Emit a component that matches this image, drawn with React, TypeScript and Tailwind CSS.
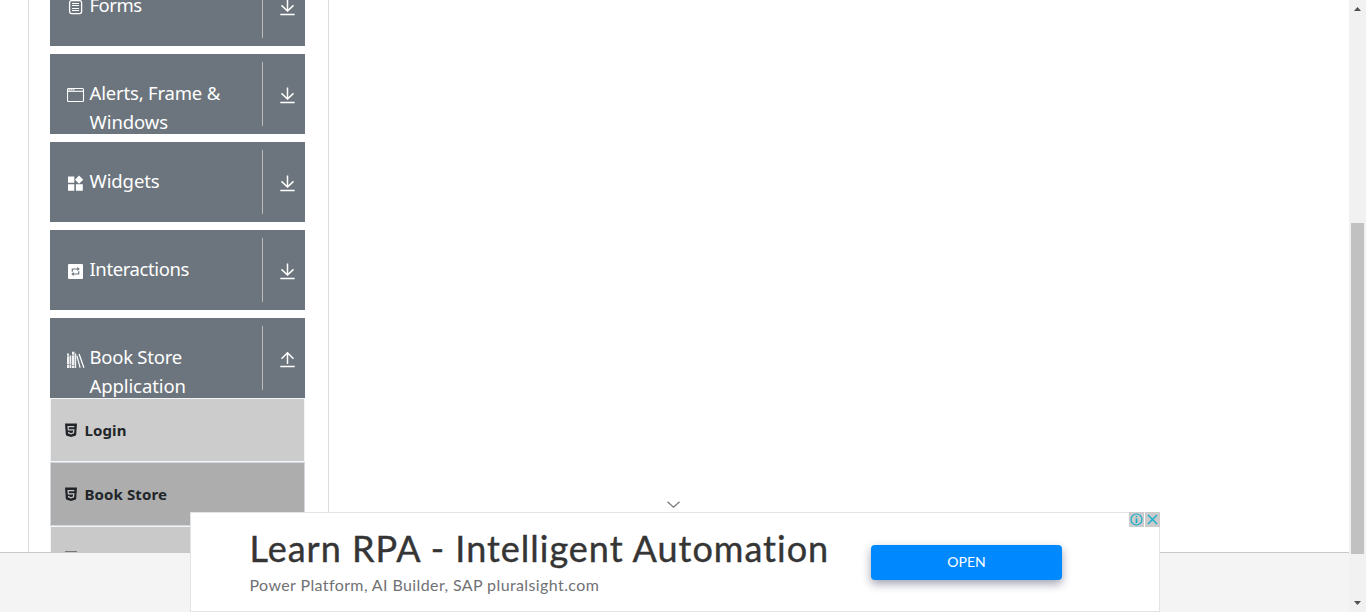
import type { ReactNode } from 'react';

function ToggleIcon({ up = false }: { up?: boolean }) {
  return (
    <svg width="16" height="18" viewBox="0 0 16 18" fill="none" stroke="#fff" strokeWidth="1.5">
      <path d="M0.3 15.5H14.7" strokeWidth="1.5" />
      {up ? <path d="M7.5 13V2M1.5 7.8L7.5 1.8L13.5 7.8" /> : <path d="M7.5 .5V12M1.5 6.4L7.5 12L13.5 6.4" />}
    </svg>
  );
}

function Html5Icon() {
  return (
    <svg className="-mt-px mr-2 shrink-0" width="12" height="14" viewBox="0 0 12 14" fill="none">
      <path d="M0 .5H12L11.2 11.6Q11.1 12.4 10.3 12.7L6 14L1.7 12.7Q.9 12.4 .8 11.6Z" fill="#212529" />
      <path d="M9.3 3.7H3.1L3.4 6.9H8.8L8.5 9.9L6 10.8L3.6 9.9V8.9" stroke="#c9c9c9" strokeWidth="1.2" />
    </svg>
  );
}

function FormIcon() {
  return (
    <svg width="18" height="18" viewBox="0 0 18 18" fill="none" stroke="#fff">
      <rect x="2.6" y="1.6" width="12" height="13" rx="2" strokeWidth="1.3" />
      <path d="M5 4.5H12M5 6.5H12M5 9.5H12M5 11.5H12" strokeWidth="1" />
    </svg>
  );
}

function WindowIcon() {
  return (
    <svg width="18" height="18" viewBox="0 0 18 18" fill="none" stroke="#fff">
      <rect x="0.5" y="1.5" width="16" height="13" rx="1" strokeWidth="1.1" />
      <path d="M.5 4.3H16.5" strokeWidth="1.1" />
      <path d="M1.5 2.9H8" strokeWidth="1.4" strokeDasharray="1.4 .6" />
    </svg>
  );
}

function WidgetsIcon() {
  return (
    <svg width="18" height="18" viewBox="0 0 18 18" fill="#fff">
      <path d="M1 1.5H7.3V7.8H1ZM1 9.2H7.3V15.8H1ZM8.9 9.2H15.8V15.8H8.9ZM12 .5L16.3 4.8L12 8.8L8 4.8Z" />
    </svg>
  );
}

function RepeatIcon() {
  return (
    <svg width="18" height="18" viewBox="0 0 18 18" fill="none">
      <rect x="1" y="1" width="15" height="15" rx="1" fill="#fff" />
      <path d="M5.3 8.8V6H11M11.7 8.2V11H6" stroke="#6c757d" strokeWidth="1.2" />
      <path d="M10.3 4L12.8 6L10.3 8ZM6.7 9L4.2 11L6.7 13Z" fill="#6c757d" />
    </svg>
  );
}

function BooksIcon() {
  return (
    <svg width="18" height="18" viewBox="0 0 18 18" fill="#fff">
      <path d="M0 2.5H2V17H0ZM2.5 4.5H4.3V17H2.5ZM5 .8H7.5V17H5ZM8 2.5H9.2V17H8Z" opacity=".9" />
      <path d="M9.3 5L10.4 4.6L13.7 16.5L12.6 17ZM11.5 3.2L12.7 2.7L17.5 16.4L16.3 16.9Z" />
      <path d="M0 5H2M0 13.5H2M2.5 13.5H4.3M5 4H7.5M5 14.5H7.5" stroke="#6c757d" strokeWidth=".6" />
    </svg>
  );
}

function Group({ icon, lines, up }: { icon: ReactNode; lines: { text: string; cls: string }[]; up?: boolean }) {
  return (
    <div className="flex h-20 w-[255px] shrink-0 overflow-hidden bg-[#6c757d] py-2 text-white">
      <div className="flex w-[213px] shrink-0 border-r border-[#bcbcbc] pl-[17px] pt-4">
        <span className="mt-[9px] size-[18px] shrink-0">{icon}</span>
        <div className="ml-[4.5px] h-[58px] text-[18.5px] leading-[29px] whitespace-nowrap">
          {lines.map((l) => (
            <div key={l.text} className={l.cls}>{l.text}</div>
          ))}
        </div>
      </div>
      <div className="flex flex-1 justify-center pl-2 pt-[25px]">
        <ToggleIcon up={up} />
      </div>
    </div>
  );
}

function Item({ label, cls }: { label: string; cls: string }) {
  return (
    <li className={`flex h-[64px] items-center border pl-[13.5px] text-[15px] font-bold tracking-[0.1px] text-[#212529] ${cls}`}>
      <Html5Icon />
      {label}
    </li>
  );
}

function Ad() {
  return (
    <section className="absolute left-[190px] top-[512px] flex h-[100px] w-[970px] border border-[#e2e3e4] bg-white">
      <div className="w-[621px] shrink-0 pl-[58.5px] pt-[13px] font-['Lato',sans-serif] whitespace-nowrap">
        <h2 className="h-[44px] text-[36px] leading-[44px] tracking-[1px] text-[#353535] [-webkit-text-stroke:0.4px_#353535]">Learn RPA - Intelligent Automation</h2>
        <p className="mt-[5px] text-[16px] leading-[20px] tracking-[0.39px] text-[#717175]">Power Platform, AI Builder, SAP pluralsight.com</p>
      </div>
      <button className="ml-[59px] mt-8 h-[35px] w-[191px] shrink-0 rounded bg-[#0088ff] pb-0.5 font-['Lato',sans-serif] text-[14px] text-white shadow-[0_4px_10px_rgba(20,25,60,0.4)]">OPEN</button>
      <div className="-mt-px ml-[67px] flex h-[15px] shrink-0 gap-px">
        <span className="size-[15px] bg-[#cbcbcb]">
          <svg width="15" height="15" viewBox="0 0 15 15" fill="none" stroke="#12aecb" strokeWidth="1.2">
            <circle cx="7.5" cy="7.5" r="5.5" />
            <path d="M7.5 6.5V11M7.5 4V5.3" strokeWidth="1.6" />
          </svg>
        </span>
        <span className="size-[15px] bg-[#cbcbcb]">
          <svg width="15" height="15" viewBox="0 0 15 15" fill="none" stroke="#12aecb" strokeWidth="1.4">
            <path d="M3 3L12 12M12 3L3 12" />
          </svg>
        </span>
      </div>
    </section>
  );
}

export default function App() {
  return (
    <div className="relative flex h-[612px] w-[1366px] overflow-hidden bg-white font-['Noto_Sans',sans-serif]">
      <main className="flex w-[1349px] shrink-0 flex-col">
        <div className="h-[552px] shrink-0 overflow-hidden pl-7">
          <aside className="flex h-[552px] w-[301px] flex-col border-x border-[#dcdcdf] pl-[21px]">
            <div className="-mt-[34px] flex shrink-0 flex-col gap-2">
              <Group icon={<FormIcon />} lines={[{ text: 'Forms', cls: 'tracking-[-0.5px]' }]} />
              <Group
                icon={<WindowIcon />}
                lines={[
                  { text: 'Alerts, Frame &', cls: 'tracking-[-0.18px]' },
                  { text: 'Windows', cls: 'tracking-[-0.05px]' },
                ]}
              />
              <Group icon={<WidgetsIcon />} lines={[{ text: 'Widgets', cls: 'tracking-[-0.08px]' }]} />
              <Group icon={<RepeatIcon />} lines={[{ text: 'Interactions', cls: 'tracking-[-0.4px]' }]} />
              <Group
                up
                icon={<BooksIcon />}
                lines={[
                  { text: 'Book Store', cls: 'tracking-[-0.25px]' },
                  { text: 'Application', cls: 'tracking-[-0.1px]' },
                ]}
              />
            </div>
            <ul className="w-[255px] shrink-0">
              <Item label="Login" cls="border-[#f3f4f6] bg-[#cccccc]" />
              <Item label="Book Store" cls="border-[#d3d8df] bg-[#adadad]" />
              <Item label="" cls="border-[#f3f4f6] bg-[#c9c9c9]" />
            </ul>
          </aside>
        </div>
        <footer className="flex-1 border-t border-[#c8c8c8] bg-[#f4f4f4]" />
      </main>
      <div className="flex w-[17px] shrink-0 flex-col bg-[#f1f1f1]">
        <div className="flex h-[223px] justify-center pt-[7px]">
          <svg width="7" height="4" viewBox="0 0 7 4" fill="#505050"><path d="M0 4L3.5 0L7 4Z" /></svg>
        </div>
        <div className="ml-[2px] h-[331px] w-[13px] bg-[#c1c1c1]" />
        <div className="flex flex-1 justify-center pt-[47px]">
          <svg width="7" height="4" viewBox="0 0 7 4" fill="#505050"><path d="M0 0H7L3.5 4Z" /></svg>
        </div>
      </div>
      <svg className="absolute left-[666px] top-[500px]" width="15" height="10" viewBox="0 0 15 10" fill="none" stroke="#757575" strokeWidth="1.2">
        <path d="M1.5 1.7L7.5 7.3L13.5 1.7" />
      </svg>
      <Ad />
    </div>
  );
}
